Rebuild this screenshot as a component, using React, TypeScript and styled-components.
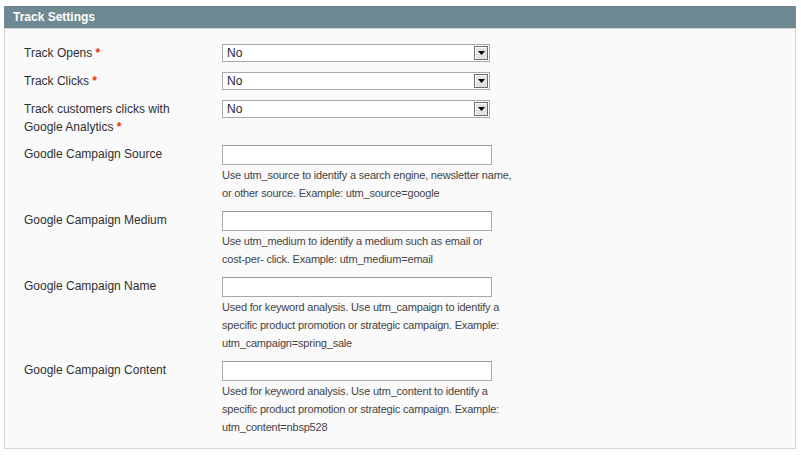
import React from "react";
import styled, { createGlobalStyle } from "styled-components";

type Field =
  | { kind: "select"; label: string; required?: boolean }
  | { kind: "text"; label: string; note: string[] };

const fields: Field[] = [
  { kind: "select", label: "Track Opens", required: true },
  { kind: "select", label: "Track Clicks", required: true },
  { kind: "select", label: "Track customers clicks with Google Analytics", required: true },
  {
    kind: "text",
    label: "Goodle Campaign Source",
    note: [
      "Use utm_source to identify a search engine, newsletter name,",
      "or other source. Example: utm_source=google"
    ]
  },
  {
    kind: "text",
    label: "Google Campaign Medium",
    note: [
      "Use utm_medium to identify a medium such as email or",
      "cost-per- click. Example: utm_medium=email"
    ]
  },
  {
    kind: "text",
    label: "Google Campaign Name",
    note: [
      "Used for keyword analysis. Use utm_campaign to identify a",
      "specific product promotion or strategic campaign. Example:",
      "utm_campaign=spring_sale"
    ]
  },
  {
    kind: "text",
    label: "Google Campaign Content",
    note: [
      "Used for keyword analysis. Use utm_content to identify a",
      "specific product promotion or strategic campaign. Example:",
      "utm_content=nbsp528"
    ]
  }
];

const GlobalStyle = createGlobalStyle`
  html, body {
    margin: 0;
    padding: 0;
    background: #fff;
  }
  body {
    font-family: "Liberation Sans", Arial, sans-serif;
    font-size: 12px;
    color: #2f2f2f;
  }
`;

const Section = styled.div`
  padding: 6px 5px 0 4px;
`;

const Header = styled.div`
  height: 22px;
  background: #6f8992;
  border-bottom: 1px solid #d6d6d6;
  padding-left: 9px;
  display: flex;
  align-items: center;
  color: #fff;
  font-weight: bold;
  font-size: 12px;
`;

const Panel = styled.div`
  background: #fafafa;
  border: 1px solid #d6d6d6;
  border-top: none;
  padding: 15px 19px 12px;
  display: flex;
  flex-direction: column;
  gap: 9px;
  height: 420px;
  box-sizing: border-box;
`;

const Row = styled.div`
  display: grid;
  grid-template-columns: 198px 1fr;
  min-height: 19px;
`;

const Label = styled.div`
  line-height: 18px;
  width: 160px;
  color: #2f2f2f;
`;

const Required = styled.span`
  color: #eb340a;
  font-weight: bold;
`;

const Control = styled.div`
  display: flex;
  flex-direction: column;
`;

const SelectBox = styled.div`
  width: 268px;
  height: 18px;
  box-sizing: border-box;
  border: 1px solid #aaa;
  background: #fff;
  display: flex;
  align-items: center;
`;

const SelectText = styled.div`
  flex: 1;
  padding-left: 4px;
  font-size: 12px;
  color: #1e1e3c;
`;

const ArrowButton = styled.div`
  width: 14px;
  height: 14px;
  margin-right: 1px;
  box-sizing: border-box;
  border: 1px solid #6e6e6e;
  background: #e3e3e3;
  box-shadow: inset 1px 1px 0 #fff;
  display: flex;
  align-items: center;
  justify-content: center;
`;

const TextInput = styled.input`
  width: 270px;
  height: 20px;
  box-sizing: border-box;
  border: 1px solid #aaa;
  border-top-color: #999;
  background: #fff;
  margin: 0;
  padding: 0 3px;
  font: 12px "Liberation Sans", Arial, sans-serif;
`;

const Note = styled.div`
  margin-top: 1px;
  font-size: 11px;
  line-height: 18px;
  letter-spacing: -0.2px;
  color: #444;
`;

const NoteLine = styled.div`
  white-space: nowrap;
`;

const Select = () => (
  <SelectBox>
    <SelectText>No</SelectText>
    <ArrowButton>
      <svg width="7" height="4" viewBox="0 0 7 4">
        <path d="M0 0H7L3.5 4Z" fill="#000" />
      </svg>
    </ArrowButton>
  </SelectBox>
);

const App = () => (
  <>
    <GlobalStyle />
    <Section>
      <Header>Track Settings</Header>
      <Panel>
        {fields.map((f) => (
          <Row key={f.label}>
            <Label>
              {f.label}
              {f.kind === "select" && f.required && <Required>&nbsp;*</Required>}
            </Label>
            <Control>
              {f.kind === "select" ? (
                <Select />
              ) : (
                <>
                  <TextInput type="text" />
                  <Note>
                    {f.note.map((line) => (
                      <NoteLine key={line}>{line}</NoteLine>
                    ))}
                  </Note>
                </>
              )}
            </Control>
          </Row>
        ))}
      </Panel>
    </Section>
  </>
);

export default App;
